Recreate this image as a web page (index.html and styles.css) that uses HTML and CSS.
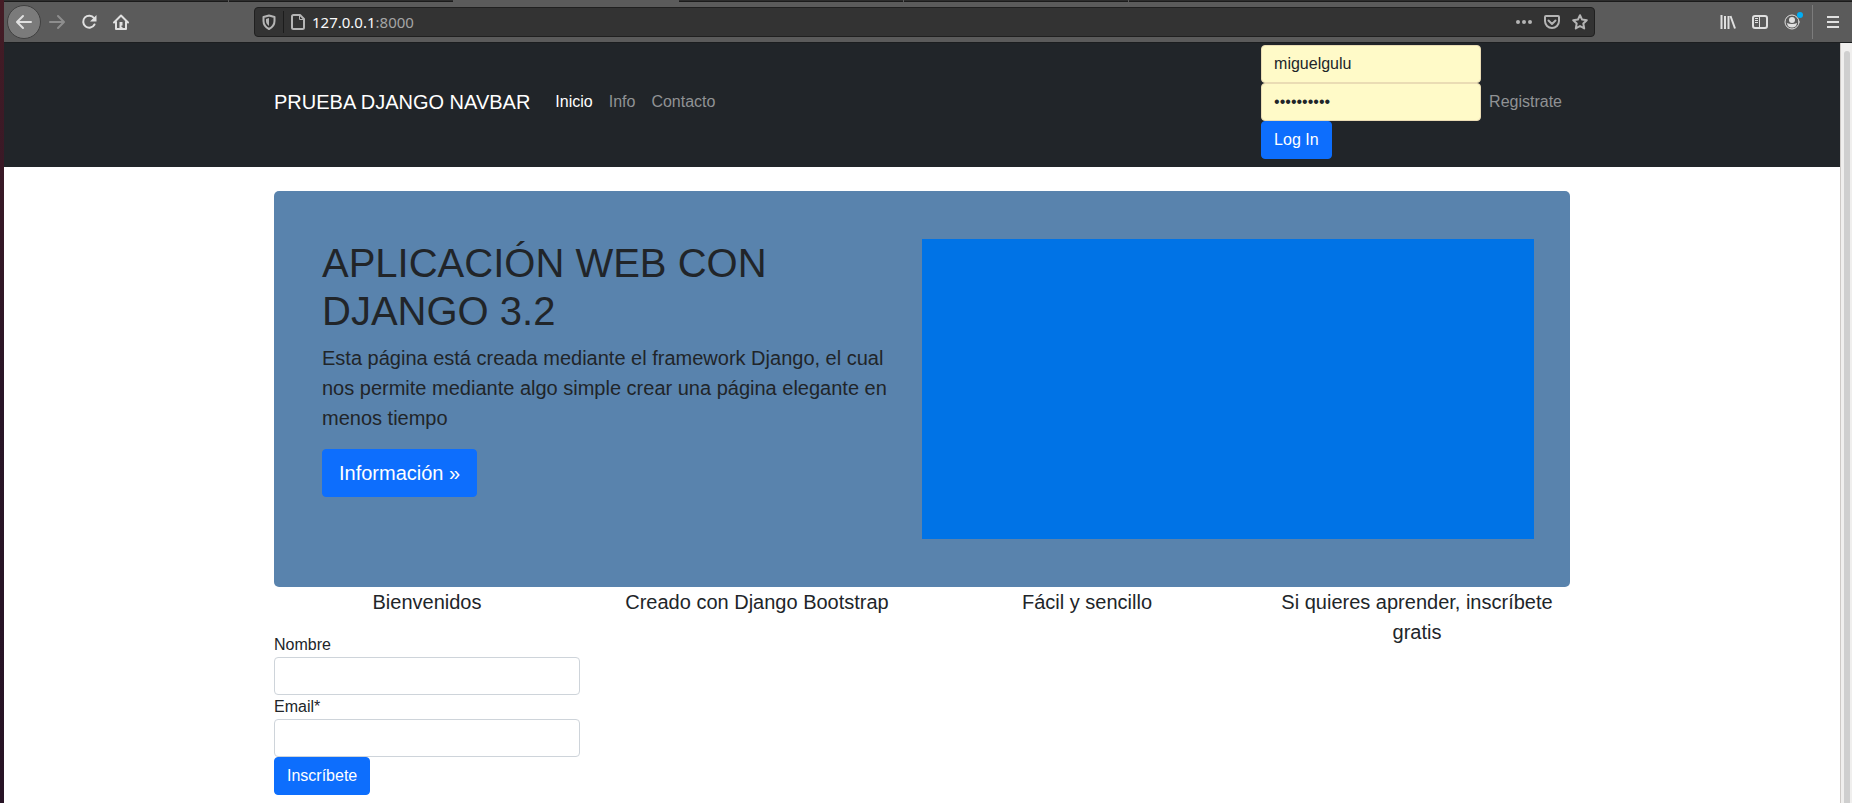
FILE: index.html
```html
<!DOCTYPE html>
<html lang="es">
<head>
<meta charset="utf-8">
<title>Prueba Django</title>
<link rel="stylesheet" href="styles.css">
</head>
<body>
<div class="desktop">
<div class="browser">
  <div class="tabs"><span class="tab"></span><span class="tab"></span><span class="tab tab-active"></span><span class="tab"></span><span class="tab"></span></div>
  <div class="toolbar">
    <button class="tool back" aria-label="Atrás"><svg viewBox="0 0 16 16"><path d="M15 8H1.500M7 2 1 8l6 6"/></svg></button>
    <button class="tool forward" aria-label="Adelante"><svg viewBox="0 0 16 16"><path d="M1 8h13.500M9 2l6 6-6 6"/></svg></button>
    <button class="tool" aria-label="Recargar"><svg viewBox="0 0 16 16"><path d="M13 4A6 6 0 1 0 13.500 10.500"/><path class="solid" d="M15.500 1v6.500H9z"/></svg></button>
    <button class="tool" aria-label="Inicio"><svg viewBox="0 0 16 16"><path d="M1 8.500 8 1.500l7 7M3 8v7h10V8"/><path class="solid" d="M6.500 8h3v3.500h-1V13h1v2h-3z"/></svg></button>
    <div class="address">
      <button class="mini" aria-label="Protección"><svg viewBox="0 0 16 16"><path d="M8 1.500 13.500 3v4c0 4-2.500 6.500-5.500 8C5 13.500 2.500 11 2.500 7V3z"/><path class="solid" d="M8 4v8C6 10.500 5 9 5 7V5z"/></svg></button>
      <span class="divider"></span>
      <button class="mini" aria-label="Información del sitio"><svg viewBox="0 0 16 16"><path d="M3.500 1H10l4 4v8.500q0 1.500-1.500 1.500h-9Q2 15 2 13.500v-11Q2 1 3.500 1z"/><path class="thin" d="M9.500 1v4.500H14"/></svg></button>
      <span class="url">127.0.0.1<span class="port">:8000</span></span>
      <button class="mini" aria-label="Más"><svg viewBox="0 0 16 16"><circle class="solid" cx="2" cy="8" r="2"/><circle class="solid" cx="8" cy="8" r="2"/><circle class="solid" cx="14" cy="8" r="2"/></svg></button>
      <button class="mini" aria-label="Pocket"><svg viewBox="0 0 16 16"><path d="M2 2h12q1 0 1 1v4a7 7 0 0 1-14 0V3q0-1 1-1zM4.500 6.500 8 10l3.500-3.500"/></svg></button>
      <button class="mini" aria-label="Marcador"><svg viewBox="0 0 16 16"><path d="m8 1.200 2.100 4.400 4.700.6-3.500 3.300.9 4.900L8 12l-4.200 2.400.9-4.900L1.200 6.200l4.700-.6z"/></svg></button>
    </div>
    <button class="tool square" aria-label="Biblioteca"><svg viewBox="0 0 16 16"><path d="M1.500 1v14M5 2v13M8.500 2v13M10.500 2l4.500 12.500"/></svg></button>
    <button class="tool square" aria-label="Barra lateral"><svg viewBox="0 0 16 16"><rect x="1" y="2" width="14" height="12" rx="2"/><path class="thin" d="M7.500 2v12M3 4.500h3M3 6.500h3M3 8.500h3"/></svg></button>
    <button class="tool" aria-label="Cuenta"><svg viewBox="0 0 16 16"><circle class="thin" cx="8" cy="8" r="7"/><circle class="solid" cx="8" cy="6" r="3"/><path class="solid" d="M3 9q2 1 5 1t5-1q-.5 4.500-5 4.500T3 9z"/><circle class="alert" cx="16" cy="1" r="3"/></svg></button>
    <span class="menu-divider"></span>
    <button class="tool square" aria-label="Menú"><svg viewBox="0 0 16 16"><path d="M2 3h12M2 8h12M2 13h12"/></svg></button>
  </div>
  <div class="viewport">
    <div class="page">
      <nav class="navbar">
        <div class="container nav-inner">
          <a class="brand" href="#">PRUEBA DJANGO NAVBAR</a>
          <a class="nav-link active" href="#">Inicio</a>
          <a class="nav-link" href="#">Info</a>
          <a class="nav-link" href="#">Contacto</a>
          <form class="login">
            <input class="field saved" type="text" aria-label="Usuario" value="miguelgulu">
            <input class="field saved" type="password" aria-label="Contraseña" value="contrasena">
            <button class="btn" type="button">Log In</button>
          </form>
          <a class="nav-link" href="#">Registrate</a>
        </div>
      </nav>
      <main class="container">
        <section class="hero">
          <div class="hero-text">
            <h1>APLICACIÓN WEB CON DJANGO 3.2</h1>
            <p class="lead">Esta página está creada mediante el framework Django, el cual nos permite mediante algo simple crear una página elegante en menos tiempo</p>
            <a class="btn btn-large" href="#">Información »</a>
          </div>
          <div class="hero-image"></div>
        </section>
        <section class="features">
          <div>
            <p class="feature">Bienvenidos</p>
            <form class="signup">
              <label for="nombre">Nombre</label>
              <input class="field" id="nombre" type="text">
              <label for="email">Email*</label>
              <input class="field" id="email" type="email">
              <button class="btn" type="button">Inscríbete</button>
            </form>
          </div>
          <p class="feature">Creado con Django Bootstrap</p>
          <p class="feature">Fácil y sencillo</p>
          <p class="feature">Si quieres aprender, inscríbete gratis</p>
        </section>
      </main>
    </div>
    <div class="scrollbar"><div class="thumb"></div></div>
  </div>
</div>
</div>
</body>
</html>
```
FILE: styles.css
```css
*, *::before, *::after { box-sizing: border-box; }

body {
  margin: 0;
  font: 16px/24px "Liberation Sans", Arial, sans-serif;
  color: #212529;
}

a { text-decoration: none; }
button, input { font: inherit; }
h1, p { margin: 0; }

.desktop {
  min-height: 100vh;
  display: flex;
  padding-left: 4px;
  background: linear-gradient(#451c25, #291527 50%, #271325);
}

.browser {
  flex: 1;
  display: flex;
  flex-direction: column;
  background: #fff;
}

/* Browser chrome */
.tabs {
  height: 2px;
  display: flex;
  background: linear-gradient(#2d2d2d 50%, #1b1b1b 50%);
}
.tab { width: 225px; border-right: 1px solid #5b5b5b; }
.tab-active { background: #5b5b5b; }

.toolbar {
  height: 41px;
  display: flex;
  align-items: center;
  padding: 0 3px;
  background: #5b5b5b;
  border-bottom: 1px solid #1c1e20;
}

.tool, .mini {
  display: flex;
  align-items: center;
  justify-content: center;
  flex: none;
  padding: 0;
  border: 0;
  background: none;
  color: #e0e0e0;
}
.tool { width: 32px; height: 32px; }
.mini { width: 28px; height: 28px; color: #b5b5b5; }

.tool svg, .mini svg {
  width: 16px;
  height: 16px;
  overflow: visible;
  fill: none;
  stroke: currentColor;
  stroke-width: 2;
  stroke-linejoin: round;
  stroke-linecap: round;
}
.square svg { stroke-linecap: butt; }
svg .solid { fill: currentColor; stroke: none; }
svg .thin { stroke-width: 1; }
svg .alert { fill: #00aef5; stroke: none; }

.back {
  width: 34px;
  height: 34px;
  border: 1px solid #404040;
  border-radius: 50%;
  background: #7b7b7b;
}
.forward { color: #8e8e8e; }

.address {
  flex: 1;
  height: 30px;
  display: flex;
  align-items: center;
  margin: 0 117px;
  border: 1px solid #202020;
  border-radius: 4px;
  background: #333;
}
.divider { width: 1px; height: 22px; background: #1c1c1c; }
.url {
  flex: 1;
  color: #f9f9fa;
  font: 15px/20px "Noto Sans", "Open Sans", sans-serif;
}
.port { color: #a5a5a5; }
.menu-divider { width: 1px; height: 34px; margin: 0 4px; background: #7c7c7c; }

.viewport { flex: 1; display: flex; }
.page { flex: 1; }
.scrollbar {
  width: 12px;
  display: flex;
  justify-content: center;
  padding-top: 8px;
  background: #f0efee;
  border-left: 1px solid #cdc9c6;
}
.thumb { width: 6px; border-radius: 3px 3px 0 0; background: #cfcfcf; }

/* Page */
.container { max-width: 1320px; margin: 0 auto; padding: 0 12px; }

.navbar { padding: 2px 0 8px; background: #212529; }
.nav-inner { display: flex; align-items: center; }
.brand { margin-right: 17px; color: #fff; font-size: 20px; line-height: 30px; }
.nav-link { padding: 8px; color: #909294; }
.nav-link.active { color: #fff; }
.login { width: 220px; margin-left: auto; }

.field {
  display: block;
  width: 100%;
  height: 38px;
  padding: 6px 12px;
  border: 1px solid #ced4da;
  border-radius: 4px;
  background: #fff;
  color: #212529;
}
.field.saved { background: #fffac8; border-color: #eadcb4; }

.btn {
  display: inline-block;
  padding: 6px 12px;
  border: 1px solid #0d6efd;
  border-radius: 4px;
  background: #0d6efd;
  color: #fff;
}
.login .btn, .signup .btn { display: block; }
.btn-large { padding: 8px 16px; font-size: 20px; line-height: 30px; }

.hero {
  display: grid;
  grid-template-columns: 1fr 1fr;
  margin-top: 24px;
  padding: 48px 36px;
  border-radius: 5px;
  background: #5983ad;
}
.hero-text { padding: 0 12px; }
.hero h1 { margin-bottom: 8px; font-size: 40px; font-weight: 400; line-height: 48px; }
.lead { margin-bottom: 16px; font-size: 20px; line-height: 30px; }
.hero-image { height: 300px; background: #0073e6; }

.features {
  display: grid;
  grid-template-columns: repeat(4, 1fr);
  column-gap: 24px;
}
.feature {
  margin-bottom: 16px;
  font-size: 20px;
  line-height: 30px;
  text-align: center;
}
.signup label { display: block; }
```
